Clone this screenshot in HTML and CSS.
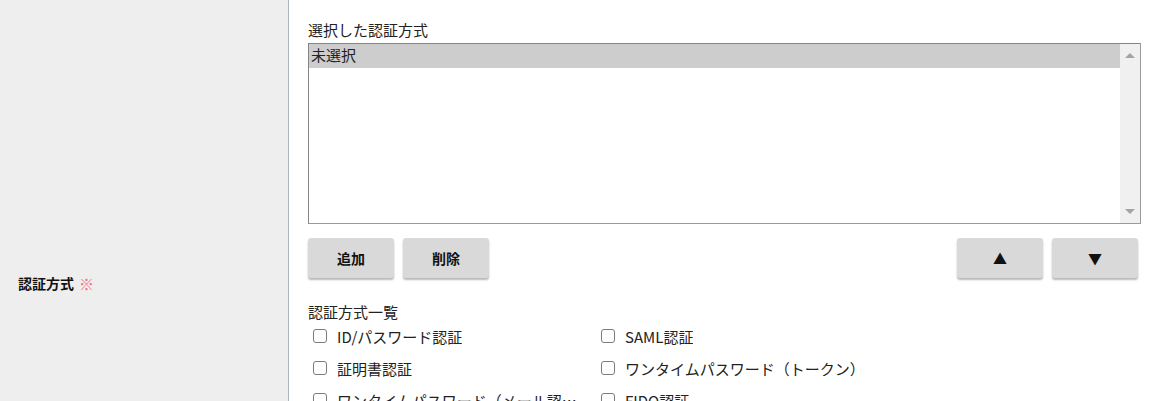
FILE: index.html
```html
<!DOCTYPE html>
<html lang="ja">
<head>
<meta charset="utf-8">
<title>認証方式</title>
<link rel="stylesheet" href="styles.css">
</head>
<body>
<div class="form-row">
  <div class="row-label">
    <span class="label-text">認証方式</span><span class="required">※</span>
  </div>
  <div class="row-body">
    <div class="field-caption">選択した認証方式</div>
    <div class="listbox">
      <div class="listbox-options">
        <div class="option selected">未選択</div>
      </div>
      <div class="scrollbar">
        <span class="arrow up"></span>
        <span class="arrow down"></span>
      </div>
    </div>
    <div class="button-bar">
      <div class="button-group">
        <button class="btn" type="button">追加</button>
        <button class="btn" type="button">削除</button>
      </div>
      <div class="button-group right">
        <button class="btn" type="button">▲</button>
        <button class="btn" type="button">▼</button>
      </div>
    </div>
    <div class="field-caption list-caption">認証方式一覧</div>
    <div class="check-grid">
      <label class="check-item"><span class="box"></span><span class="check-text">ID/パスワード認証</span></label>
      <label class="check-item"><span class="box"></span><span class="check-text">SAML認証</span></label>
      <label class="check-item"><span class="box"></span><span class="check-text">証明書認証</span></label>
      <label class="check-item"><span class="box"></span><span class="check-text">ワンタイムパスワード（トークン）</span></label>
      <label class="check-item"><span class="box"></span><span class="check-text">ワンタイムパスワード（メール認証）</span></label>
      <label class="check-item"><span class="box"></span><span class="check-text">FIDO認証</span></label>
    </div>
  </div>
</div>
</body>
</html>
```

FILE: styles.css
```css
html, body {
  margin: 0;
  padding: 0;
  background: #ffffff;
  overflow: hidden;
}

body {
  font-family: "Noto Sans CJK JP", "Noto Sans", sans-serif;
  font-size: 15px;
  color: #222222;
}

.form-row {
  display: flex;
  min-height: 566px;
}

.row-label {
  flex: none;
  width: 289px;
  box-sizing: border-box;
  background: #eeeeee;
  border-right: 1px solid #a9b7c2;
  display: flex;
  align-items: center;
  padding-left: 18px;
}

.label-text {
  font-weight: bold;
  font-size: 14px;
  color: #111111;
}

.required {
  color: #e8787c;
  font-size: 15px;
  margin-left: 5px;
}

.row-body {
  flex: 1;
  padding: 20px 19px 0 19px;
  min-width: 0;
}

.field-caption {
  line-height: 20px;
  height: 20px;
  margin-bottom: 3px;
  color: #222222;
}

.listbox {
  display: flex;
  height: 181px;
  box-sizing: border-box;
  border: 1px solid #9a9a9a;
  border-top-color: #858585;
  border-left-color: #858585;
}

.listbox-options {
  flex: 1;
}

.option {
  height: 24px;
  line-height: 22px;
  padding-left: 2px;
  color: #222222;
}

.option.selected {
  background: #cdcdcd;
}

.scrollbar {
  width: 20px;
  background: #f0f0f0;
  display: flex;
  flex-direction: column;
  justify-content: space-between;
  align-items: center;
  padding: 9px 0;
}

.arrow {
  width: 0;
  height: 0;
  border-left: 5px solid transparent;
  border-right: 5px solid transparent;
}

.arrow.up {
  border-bottom: 5px solid #a3a3a3;
}

.arrow.down {
  border-top: 5px solid #a3a3a3;
}

.button-bar {
  display: flex;
  justify-content: space-between;
  margin-top: 14px;
}

.button-group {
  display: flex;
  gap: 9px;
}

.button-group.right {
  margin-right: 3px;
}

.btn {
  width: 86px;
  height: 40px;
  border: none;
  border-radius: 3px;
  background: #d9d9d9;
  box-shadow: 0 2px 2px rgba(0, 0, 0, 0.28);
  font-family: "Noto Sans CJK JP", "Noto Sans", sans-serif;
  font-size: 14px;
  font-weight: bold;
  color: #111111;
  padding: 0;
}

.list-caption {
  margin-top: 24px;
  margin-bottom: 0;
}

.check-grid {
  display: grid;
  grid-template-columns: 288px 288px;
  grid-auto-rows: 32px;
  margin-top: -2px;
}

.check-item {
  display: flex;
  align-items: center;
  padding-left: 5px;
  padding-right: 8px;
  min-width: 0;
}

.box {
  flex: none;
  width: 14px;
  height: 14px;
  box-sizing: border-box;
  border: 1px solid #7a7a7a;
  border-radius: 3px;
  background: #ffffff;
  margin-right: 10px;
}

.check-text {
  white-space: nowrap;
  overflow: hidden;
  text-overflow: ellipsis;
  color: #222222;
}
```
